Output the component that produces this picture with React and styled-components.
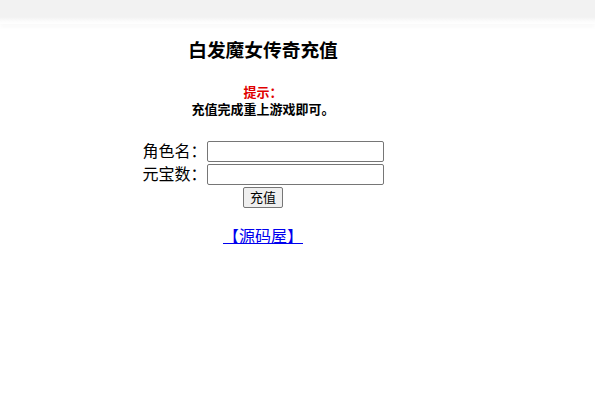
import styled, { createGlobalStyle } from "styled-components";

const GlobalStyle = createGlobalStyle`
  body {
    margin: 0;
    background: #fff;
    font-family: "Liberation Sans", "Noto Sans CJK SC", sans-serif;
    color: #000;
  }
`;

const TopBar = styled.div`
  height: 24px;
  background: linear-gradient(#f2f2f2 0, #f2f2f2 17px, #fbfbfb 21px, #fff 24px);
  box-shadow: 0 4px 3px rgba(0, 0, 0, 0.02);
`;

const Page = styled.div`
  width: 526px;
  display: flex;
  flex-direction: column;
  align-items: center;
  text-align: center;
`;

const Title = styled.h3`
  margin: 15px 0 0;
  font-size: 18.72px;
  line-height: 24px;
  font-weight: bold;
`;

const Hint = styled.div`
  margin-top: 21px;
  font-size: 13px;
  line-height: 17px;
  font-weight: bold;
`;

const HintLabel = styled.div`
  color: #e00000;
`;

const Form = styled.form`
  margin-top: 23px;
  display: grid;
  grid-template-columns: 64px 177px;
  row-gap: 2px;
  align-items: center;
`;

const Label = styled.label`
  font-size: 16px;
  line-height: 21px;
  text-align: right;
  white-space: nowrap;
`;

const Input = styled.input`
  box-sizing: border-box;
  width: 177px;
  height: 21px;
  margin: 0;
  padding: 1px 2px;
  border: 1px solid #767676;
  border-radius: 2px;
  background: #fff;
`;

const ButtonCell = styled.div`
  grid-column: 1 / 3;
  display: flex;
  justify-content: center;
`;

const Button = styled.button`
  box-sizing: border-box;
  height: 21px;
  margin: 0;
  padding: 0 6px;
  font-family: inherit;
  font-size: 13px;
  line-height: 17px;
  color: #000;
  background: #efefef;
  border: 1px solid #767676;
  border-radius: 2px;
`;

const Link = styled.a`
  margin-top: 19px;
  font-size: 16px;
  line-height: 20px;
  color: #0000ee;
  text-decoration: underline;
`;

export default function App() {
  return (
    <>
      <GlobalStyle />
      <TopBar />
      <Page>
        <Title>白发魔女传奇充值</Title>
        <Hint>
          <HintLabel>提示：</HintLabel>
          <div>充值完成重上游戏即可。</div>
        </Hint>
        <Form onSubmit={(e) => e.preventDefault()}>
          <Label>角色名：</Label>
          <Input type="text" />
          <Label>元宝数：</Label>
          <Input type="text" />
          <ButtonCell>
            <Button type="submit">充值</Button>
          </ButtonCell>
        </Form>
        <Link href="#"> 【源码屋】</Link>
      </Page>
    </>
  );
}
